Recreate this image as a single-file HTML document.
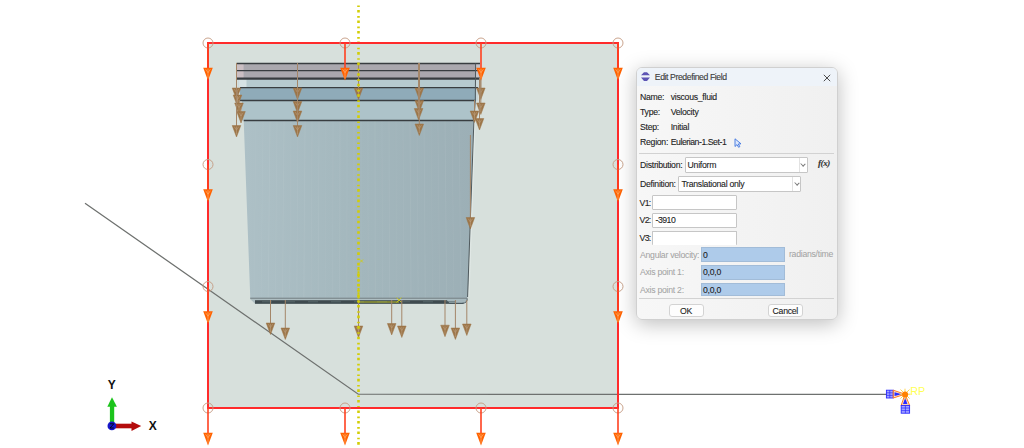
<!DOCTYPE html>
<html><head><meta charset="utf-8">
<style>
html,body{margin:0;padding:0;width:1024px;height:448px;overflow:hidden;background:#fff;}
body{position:relative;font-family:"Liberation Sans",sans-serif;}
#scene{position:absolute;left:0;top:0;}
.dlg{position:absolute;left:636px;top:67px;width:201.6px;height:253.1px;background:linear-gradient(to right,#f7f7f7,#f0f0f0);border:1px solid #d0d0d0;border-radius:6px;box-shadow:0 4px 20px rgba(0,0,0,0.26);overflow:hidden;box-sizing:border-box;font-size:8px;color:#1e1e1e;}
.tb{position:absolute;left:0;top:0;width:100%;height:18.4px;background:#eef3f9;}
.t{position:absolute;white-space:nowrap;line-height:10px;font-size:8.7px;letter-spacing:-0.27px;color:#222;-webkit-text-stroke:0.1px currentColor;}
.tt{color:#3a3a3a;letter-spacing:-0.42px;}
.fx{font-family:"Liberation Serif",serif;font-style:italic;font-weight:bold;font-size:9px;letter-spacing:-0.4px;color:#333;}
.dd{position:absolute;right:0;top:0;width:8px;height:100%;border-left:1px solid #e2e2e2;box-sizing:border-box;}
.dd:after{content:"";position:absolute;left:1.6px;top:4.2px;width:3px;height:3px;border-right:0.8px solid #7a7a7a;border-bottom:0.8px solid #7a7a7a;transform:rotate(45deg) scaleY(0.9);}
.fld{position:absolute;background:#fff;border:1px solid #c6c6c6;box-sizing:border-box;border-radius:1px;}
.bfld{position:absolute;background:#aecbea;border:1px solid #a2bcd8;box-sizing:border-box;}
.g{color:#a4a4a4;-webkit-text-stroke:0.05px currentColor;}
.sep{position:absolute;height:1px;background:#d2d2d2;}
.btn{position:absolute;background:#fdfdfd;border:1px solid #d3d3d3;box-sizing:border-box;border-radius:3px;text-align:center;}
</style></head><body>
<svg id="scene" width="1024" height="448" viewBox="0 0 1024 448">
<rect x="208" y="43" width="410" height="365" fill="#d7e0dc"/>
<polyline points="85,203.2 358.3,394.2 887,394.4" fill="none" stroke="#6e716f" stroke-width="1.25"/>
<defs><linearGradient id="bodyg" x1="0" x2="1" y1="0" y2="0"><stop offset="0" stop-color="#adc0c6"/><stop offset="0.5" stop-color="#a3b7bd"/><stop offset="1" stop-color="#9cafb6"/></linearGradient></defs>
<path d="M243.7,120.5 L473.5,120.5 L467.8,296 Q467.5,298 466,298.5 L250.2,298.5 L250.2,296 Z" fill="url(#bodyg)"/>
<line x1="256" y1="121" x2="254.0" y2="298" stroke="#ffffff" stroke-opacity="0.03" stroke-width="1"/>
<line x1="263" y1="121" x2="261.1" y2="298" stroke="#ffffff" stroke-opacity="0.04" stroke-width="1"/>
<line x1="270" y1="121" x2="268.2" y2="298" stroke="#ffffff" stroke-opacity="0.06" stroke-width="1"/>
<line x1="277" y1="121" x2="275.4" y2="298" stroke="#ffffff" stroke-opacity="0.04" stroke-width="1"/>
<line x1="284" y1="121" x2="282.5" y2="298" stroke="#ffffff" stroke-opacity="0.05" stroke-width="1"/>
<line x1="291" y1="121" x2="289.7" y2="298" stroke="#ffffff" stroke-opacity="0.03" stroke-width="1"/>
<line x1="298" y1="121" x2="296.8" y2="298" stroke="#ffffff" stroke-opacity="0.04" stroke-width="1"/>
<line x1="305" y1="121" x2="303.9" y2="298" stroke="#ffffff" stroke-opacity="0.06" stroke-width="1"/>
<line x1="312" y1="121" x2="311.1" y2="298" stroke="#ffffff" stroke-opacity="0.04" stroke-width="1"/>
<line x1="319" y1="121" x2="318.2" y2="298" stroke="#ffffff" stroke-opacity="0.05" stroke-width="1"/>
<line x1="326" y1="121" x2="325.4" y2="298" stroke="#ffffff" stroke-opacity="0.03" stroke-width="1"/>
<line x1="333" y1="121" x2="332.5" y2="298" stroke="#ffffff" stroke-opacity="0.04" stroke-width="1"/>
<line x1="340" y1="121" x2="339.6" y2="298" stroke="#ffffff" stroke-opacity="0.06" stroke-width="1"/>
<line x1="347" y1="121" x2="346.8" y2="298" stroke="#ffffff" stroke-opacity="0.04" stroke-width="1"/>
<line x1="354" y1="121" x2="353.9" y2="298" stroke="#ffffff" stroke-opacity="0.05" stroke-width="1"/>
<line x1="361" y1="121" x2="361.1" y2="298" stroke="#ffffff" stroke-opacity="0.03" stroke-width="1"/>
<line x1="368" y1="121" x2="368.2" y2="298" stroke="#ffffff" stroke-opacity="0.04" stroke-width="1"/>
<line x1="375" y1="121" x2="375.3" y2="298" stroke="#ffffff" stroke-opacity="0.06" stroke-width="1"/>
<line x1="382" y1="121" x2="382.5" y2="298" stroke="#ffffff" stroke-opacity="0.04" stroke-width="1"/>
<line x1="389" y1="121" x2="389.6" y2="298" stroke="#ffffff" stroke-opacity="0.05" stroke-width="1"/>
<line x1="396" y1="121" x2="396.8" y2="298" stroke="#ffffff" stroke-opacity="0.03" stroke-width="1"/>
<line x1="403" y1="121" x2="403.9" y2="298" stroke="#ffffff" stroke-opacity="0.04" stroke-width="1"/>
<line x1="410" y1="121" x2="411.0" y2="298" stroke="#ffffff" stroke-opacity="0.06" stroke-width="1"/>
<line x1="417" y1="121" x2="418.2" y2="298" stroke="#ffffff" stroke-opacity="0.04" stroke-width="1"/>
<line x1="424" y1="121" x2="425.3" y2="298" stroke="#ffffff" stroke-opacity="0.05" stroke-width="1"/>
<line x1="431" y1="121" x2="432.5" y2="298" stroke="#ffffff" stroke-opacity="0.03" stroke-width="1"/>
<line x1="438" y1="121" x2="439.6" y2="298" stroke="#ffffff" stroke-opacity="0.04" stroke-width="1"/>
<line x1="445" y1="121" x2="446.7" y2="298" stroke="#ffffff" stroke-opacity="0.06" stroke-width="1"/>
<line x1="452" y1="121" x2="453.9" y2="298" stroke="#ffffff" stroke-opacity="0.04" stroke-width="1"/>
<line x1="459" y1="121" x2="461.0" y2="298" stroke="#ffffff" stroke-opacity="0.05" stroke-width="1"/>
<rect x="236.6" y="63" width="243.4" height="15.7" fill="#aaa8ae"/>
<rect x="236.6" y="63.5" width="7" height="15.2" fill="#cbbfc3"/>
<rect x="238.5" y="78.7" width="240.5" height="9" fill="#b6cacf"/>
<rect x="238.5" y="78.7" width="8" height="9" fill="#d6e2e4"/>
<rect x="476" y="63.5" width="4" height="15" fill="#c4c3c8"/>
<rect x="476" y="78.7" width="3" height="9" fill="#cad8da"/>
<rect x="240" y="87.6" width="236" height="13" fill="#8fabb9"/>
<rect x="476" y="87.6" width="2" height="13" fill="#c6d4d8"/>
<rect x="242" y="100.5" width="233" height="20" fill="#adc3c9"/>
<g stroke="#383d40" stroke-width="1.3"><line x1="236.6" y1="63.5" x2="480" y2="63.5"/><line x1="236.6" y1="70.7" x2="480" y2="70.7"/><line x1="236.6" y1="78.6" x2="480" y2="78.6" stroke-width="2.2"/><line x1="240" y1="87.6" x2="478" y2="87.6"/><line x1="240" y1="100.5" x2="475.5" y2="100.5"/><line x1="243.7" y1="120.5" x2="473.5" y2="120.5"/></g>
<polyline points="475.6,63.5 475.3,100.5 473.9,120.5 467.6,297" fill="none" stroke="#505a5e" stroke-width="1"/>
<line x1="475.2" y1="121" x2="469" y2="297" stroke="#f0f4f4" stroke-opacity="0.5" stroke-width="0.8"/>
<rect x="250.2" y="297.6" width="217" height="1.5" fill="#828f93"/>
<path d="M250.2,299 L467,299 L463.5,303.8 L255,303.8 Z" fill="#aebec2"/>
<rect x="255" y="300.2" width="208.5" height="3.6" fill="#3f4b4f"/>
<path d="M446,299.2 L467,299.2 Q467,303 462,303 L449.5,303 Z" fill="#a5b7bc"/>
<path d="M449.5,303.3 L462,303.3 Q467.3,303.3 467.3,298.5" fill="none" stroke="#46545a" stroke-width="0.9"/>
<rect x="262" y="301" width="10" height="1.4" fill="#5a6a6e" fill-opacity="0.6"/>
<rect x="285" y="301" width="10" height="1.4" fill="#5a6a6e" fill-opacity="0.6"/>
<rect x="308" y="301" width="10" height="1.4" fill="#5a6a6e" fill-opacity="0.6"/>
<rect x="331" y="301" width="10" height="1.4" fill="#5a6a6e" fill-opacity="0.6"/>
<rect x="354" y="301" width="10" height="1.4" fill="#5a6a6e" fill-opacity="0.6"/>
<rect x="377" y="301" width="10" height="1.4" fill="#5a6a6e" fill-opacity="0.6"/>
<rect x="400" y="301" width="10" height="1.4" fill="#5a6a6e" fill-opacity="0.6"/>
<rect x="423" y="301" width="10" height="1.4" fill="#5a6a6e" fill-opacity="0.6"/>
<rect x="446" y="301" width="10" height="1.4" fill="#5a6a6e" fill-opacity="0.6"/>
<line x1="358.5" y1="302" x2="399" y2="302" stroke="#c8c820" stroke-width="0.9"/>
<path d="M396.5,297.5 L401.5,302.5 M401.5,297.5 L396.5,302.5" stroke="#c8c820" stroke-width="0.9"/>
<line x1="236.5" y1="63" x2="236.5" y2="89.0" stroke="#a48668" stroke-width="1"/>
<path d="M232.2,88.0 L240.8,88.0 L236.5,99.5 Z" fill="#9c7548" stroke="#9c7548" stroke-width="0.5" stroke-linejoin="round"/>
<path d="M234.35,89.2 L236.5,92.5 L238.65,89.2 M236.5,89.0 L236.5,97.0" stroke="#bca07e" stroke-width="0.6" fill="none"/>
<line x1="237.5" y1="92" x2="237.5" y2="96.0" stroke="#a48668" stroke-width="1"/>
<path d="M233.2,95.0 L241.8,95.0 L237.5,106.5 Z" fill="#9c7548" stroke="#9c7548" stroke-width="0.5" stroke-linejoin="round"/>
<path d="M235.35,96.2 L237.5,99.5 L239.65,96.2 M237.5,96.0 L237.5,104.0" stroke="#bca07e" stroke-width="0.6" fill="none"/>
<line x1="239" y1="100" x2="239" y2="104.0" stroke="#a48668" stroke-width="1"/>
<path d="M234.7,103.0 L243.3,103.0 L239,114.5 Z" fill="#9c7548" stroke="#9c7548" stroke-width="0.5" stroke-linejoin="round"/>
<path d="M236.85,104.2 L239,107.5 L241.15,104.2 M239,104.0 L239,112.0" stroke="#bca07e" stroke-width="0.6" fill="none"/>
<line x1="241" y1="108" x2="241" y2="112.5" stroke="#a48668" stroke-width="1"/>
<path d="M236.7,111.5 L245.3,111.5 L241,123 Z" fill="#9c7548" stroke="#9c7548" stroke-width="0.5" stroke-linejoin="round"/>
<path d="M238.85,112.7 L241,116.0 L243.15,112.7 M241,112.5 L241,120.5" stroke="#bca07e" stroke-width="0.6" fill="none"/>
<line x1="236.5" y1="63" x2="236.5" y2="126.5" stroke="#a48668" stroke-width="1"/>
<path d="M232.2,125.5 L240.8,125.5 L236.5,137 Z" fill="#9c7548" stroke="#9c7548" stroke-width="0.5" stroke-linejoin="round"/>
<path d="M234.35,126.7 L236.5,130.0 L238.65,126.7 M236.5,126.5 L236.5,134.5" stroke="#bca07e" stroke-width="0.6" fill="none"/>
<line x1="297.5" y1="63" x2="297.5" y2="89.0" stroke="#a48668" stroke-width="1"/>
<path d="M293.2,88.0 L301.8,88.0 L297.5,99.5 Z" fill="#9c7548" stroke="#9c7548" stroke-width="0.5" stroke-linejoin="round"/>
<path d="M295.35,89.2 L297.5,92.5 L299.65,89.2 M297.5,89.0 L297.5,97.0" stroke="#bca07e" stroke-width="0.6" fill="none"/>
<line x1="297.5" y1="63" x2="297.5" y2="102.5" stroke="#a48668" stroke-width="1"/>
<path d="M293.2,101.5 L301.8,101.5 L297.5,113 Z" fill="#9c7548" stroke="#9c7548" stroke-width="0.5" stroke-linejoin="round"/>
<path d="M295.35,102.7 L297.5,106.0 L299.65,102.7 M297.5,102.5 L297.5,110.5" stroke="#bca07e" stroke-width="0.6" fill="none"/>
<line x1="297.5" y1="63" x2="297.5" y2="112.0" stroke="#a48668" stroke-width="1"/>
<path d="M293.2,111.0 L301.8,111.0 L297.5,122.5 Z" fill="#9c7548" stroke="#9c7548" stroke-width="0.5" stroke-linejoin="round"/>
<path d="M295.35,112.2 L297.5,115.5 L299.65,112.2 M297.5,112.0 L297.5,120.0" stroke="#bca07e" stroke-width="0.6" fill="none"/>
<line x1="297.5" y1="63" x2="297.5" y2="126.5" stroke="#a48668" stroke-width="1"/>
<path d="M293.2,125.5 L301.8,125.5 L297.5,137 Z" fill="#9c7548" stroke="#9c7548" stroke-width="0.5" stroke-linejoin="round"/>
<path d="M295.35,126.7 L297.5,130.0 L299.65,126.7 M297.5,126.5 L297.5,134.5" stroke="#bca07e" stroke-width="0.6" fill="none"/>
<line x1="358.5" y1="63" x2="358.5" y2="89.0" stroke="#a48668" stroke-width="1"/>
<path d="M354.2,88.0 L362.8,88.0 L358.5,99.5 Z" fill="#9c7548" stroke="#9c7548" stroke-width="0.5" stroke-linejoin="round"/>
<path d="M356.35,89.2 L358.5,92.5 L360.65,89.2 M358.5,89.0 L358.5,97.0" stroke="#bca07e" stroke-width="0.6" fill="none"/>
<line x1="419.3" y1="63" x2="419.3" y2="89.0" stroke="#a48668" stroke-width="1"/>
<path d="M415.0,88.0 L423.6,88.0 L419.3,99.5 Z" fill="#9c7548" stroke="#9c7548" stroke-width="0.5" stroke-linejoin="round"/>
<path d="M417.15000000000003,89.2 L419.3,92.5 L421.45,89.2 M419.3,89.0 L419.3,97.0" stroke="#bca07e" stroke-width="0.6" fill="none"/>
<line x1="419.3" y1="63" x2="419.3" y2="101.5" stroke="#a48668" stroke-width="1"/>
<path d="M415.0,100.5 L423.6,100.5 L419.3,112 Z" fill="#9c7548" stroke="#9c7548" stroke-width="0.5" stroke-linejoin="round"/>
<path d="M417.15000000000003,101.7 L419.3,105.0 L421.45,101.7 M419.3,101.5 L419.3,109.5" stroke="#bca07e" stroke-width="0.6" fill="none"/>
<line x1="418.6" y1="63" x2="418.6" y2="109.5" stroke="#a48668" stroke-width="1"/>
<path d="M414.3,108.5 L422.90000000000003,108.5 L418.6,120 Z" fill="#9c7548" stroke="#9c7548" stroke-width="0.5" stroke-linejoin="round"/>
<path d="M416.45000000000005,109.7 L418.6,113.0 L420.75,109.7 M418.6,109.5 L418.6,117.5" stroke="#bca07e" stroke-width="0.6" fill="none"/>
<line x1="419.3" y1="63" x2="419.3" y2="125.0" stroke="#a48668" stroke-width="1"/>
<path d="M415.0,124.0 L423.6,124.0 L419.3,135.5 Z" fill="#9c7548" stroke="#9c7548" stroke-width="0.5" stroke-linejoin="round"/>
<path d="M417.15000000000003,125.2 L419.3,128.5 L421.45,125.2 M419.3,125.0 L419.3,133.0" stroke="#bca07e" stroke-width="0.6" fill="none"/>
<line x1="480.8" y1="78" x2="480.8" y2="89.0" stroke="#a48668" stroke-width="1"/>
<path d="M476.5,88.0 L485.1,88.0 L480.8,99.5 Z" fill="#9c7548" stroke="#9c7548" stroke-width="0.5" stroke-linejoin="round"/>
<path d="M478.65000000000003,89.2 L480.8,92.5 L482.95,89.2 M480.8,89.0 L480.8,97.0" stroke="#bca07e" stroke-width="0.6" fill="none"/>
<line x1="480.8" y1="78" x2="480.8" y2="104.0" stroke="#a48668" stroke-width="1"/>
<path d="M476.5,103.0 L485.1,103.0 L480.8,114.5 Z" fill="#9c7548" stroke="#9c7548" stroke-width="0.5" stroke-linejoin="round"/>
<path d="M478.65000000000003,104.2 L480.8,107.5 L482.95,104.2 M480.8,104.0 L480.8,112.0" stroke="#bca07e" stroke-width="0.6" fill="none"/>
<line x1="474.5" y1="100" x2="474.5" y2="112.0" stroke="#a48668" stroke-width="1"/>
<path d="M470.2,111.0 L478.8,111.0 L474.5,122.5 Z" fill="#9c7548" stroke="#9c7548" stroke-width="0.5" stroke-linejoin="round"/>
<path d="M472.35,112.2 L474.5,115.5 L476.65,112.2 M474.5,112.0 L474.5,120.0" stroke="#bca07e" stroke-width="0.6" fill="none"/>
<line x1="479.5" y1="78" x2="479.5" y2="119.5" stroke="#a48668" stroke-width="1"/>
<path d="M475.2,118.5 L483.8,118.5 L479.5,130 Z" fill="#9c7548" stroke="#9c7548" stroke-width="0.5" stroke-linejoin="round"/>
<path d="M477.35,119.7 L479.5,123.0 L481.65,119.7 M479.5,119.5 L479.5,127.5" stroke="#bca07e" stroke-width="0.6" fill="none"/>
<line x1="470.4" y1="135" x2="470.4" y2="218.5" stroke="#a48668" stroke-width="1"/>
<path d="M466.09999999999997,217.5 L474.7,217.5 L470.4,229 Z" fill="#9c7548" stroke="#9c7548" stroke-width="0.5" stroke-linejoin="round"/>
<path d="M468.25,218.7 L470.4,222.0 L472.54999999999995,218.7 M470.4,218.5 L470.4,226.5" stroke="#bca07e" stroke-width="0.6" fill="none"/>
<line x1="270.5" y1="300" x2="270.5" y2="324.0" stroke="#a48668" stroke-width="1"/>
<path d="M266.2,323.0 L274.8,323.0 L270.5,334.5 Z" fill="#9c7548" stroke="#9c7548" stroke-width="0.5" stroke-linejoin="round"/>
<path d="M268.35,324.2 L270.5,327.5 L272.65,324.2 M270.5,324.0 L270.5,332.0" stroke="#bca07e" stroke-width="0.6" fill="none"/>
<line x1="285.3" y1="300" x2="285.3" y2="329.0" stroke="#a48668" stroke-width="1"/>
<path d="M281.0,328.0 L289.6,328.0 L285.3,339.5 Z" fill="#9c7548" stroke="#9c7548" stroke-width="0.5" stroke-linejoin="round"/>
<path d="M283.15000000000003,329.2 L285.3,332.5 L287.45,329.2 M285.3,329.0 L285.3,337.0" stroke="#bca07e" stroke-width="0.6" fill="none"/>
<line x1="358.5" y1="300" x2="358.5" y2="327.0" stroke="#a48668" stroke-width="1"/>
<path d="M354.2,326.0 L362.8,326.0 L358.5,337.5 Z" fill="#9c7548" stroke="#9c7548" stroke-width="0.5" stroke-linejoin="round"/>
<path d="M356.35,327.2 L358.5,330.5 L360.65,327.2 M358.5,327.0 L358.5,335.0" stroke="#bca07e" stroke-width="0.6" fill="none"/>
<line x1="391.7" y1="300" x2="391.7" y2="324.5" stroke="#a48668" stroke-width="1"/>
<path d="M387.4,323.5 L396.0,323.5 L391.7,335 Z" fill="#9c7548" stroke="#9c7548" stroke-width="0.5" stroke-linejoin="round"/>
<path d="M389.55,324.7 L391.7,328.0 L393.84999999999997,324.7 M391.7,324.5 L391.7,332.5" stroke="#bca07e" stroke-width="0.6" fill="none"/>
<line x1="401.8" y1="300" x2="401.8" y2="327.0" stroke="#a48668" stroke-width="1"/>
<path d="M397.5,326.0 L406.1,326.0 L401.8,337.5 Z" fill="#9c7548" stroke="#9c7548" stroke-width="0.5" stroke-linejoin="round"/>
<path d="M399.65000000000003,327.2 L401.8,330.5 L403.95,327.2 M401.8,327.0 L401.8,335.0" stroke="#bca07e" stroke-width="0.6" fill="none"/>
<line x1="445" y1="300" x2="445" y2="326.2" stroke="#a48668" stroke-width="1"/>
<path d="M440.7,325.2 L449.3,325.2 L445,336.7 Z" fill="#9c7548" stroke="#9c7548" stroke-width="0.5" stroke-linejoin="round"/>
<path d="M442.85,326.4 L445,329.7 L447.15,326.4 M445,326.2 L445,334.2" stroke="#bca07e" stroke-width="0.6" fill="none"/>
<line x1="455.4" y1="300" x2="455.4" y2="329.0" stroke="#a48668" stroke-width="1"/>
<path d="M451.09999999999997,328.0 L459.7,328.0 L455.4,339.5 Z" fill="#9c7548" stroke="#9c7548" stroke-width="0.5" stroke-linejoin="round"/>
<path d="M453.25,329.2 L455.4,332.5 L457.54999999999995,329.2 M455.4,329.0 L455.4,337.0" stroke="#bca07e" stroke-width="0.6" fill="none"/>
<line x1="466.8" y1="300" x2="466.8" y2="325.0" stroke="#a48668" stroke-width="1"/>
<path d="M462.5,324.0 L471.1,324.0 L466.8,335.5 Z" fill="#9c7548" stroke="#9c7548" stroke-width="0.5" stroke-linejoin="round"/>
<path d="M464.65000000000003,325.2 L466.8,328.5 L468.95,325.2 M466.8,325.0 L466.8,333.0" stroke="#bca07e" stroke-width="0.6" fill="none"/>
<line x1="358.5" y1="5.5" x2="358.5" y2="448" stroke="#d2ce06" stroke-width="2.6" stroke-dasharray="1.6 2.8 2.6 3.54"/>
<line x1="358.5" y1="267" x2="358.5" y2="303" stroke="#d2ce06" stroke-width="2" stroke-dasharray="2.2 2"/>
<path d="M360,259.5 L363,262.5 M363,259.5 L360,262.5" stroke="#d2ce06" stroke-width="0.8"/>
<rect x="208" y="43" width="410" height="365" fill="none" stroke="#ff2b2b" stroke-width="2"/>
<circle cx="208" cy="43" r="5" fill="none" stroke="#c49a80" stroke-width="0.9"/>
<circle cx="345" cy="43" r="5" fill="none" stroke="#c49a80" stroke-width="0.9"/>
<circle cx="481" cy="43" r="5" fill="none" stroke="#c49a80" stroke-width="0.9"/>
<circle cx="618" cy="43" r="5" fill="none" stroke="#c49a80" stroke-width="0.9"/>
<circle cx="208" cy="164.5" r="5" fill="none" stroke="#c49a80" stroke-width="0.9"/>
<circle cx="208" cy="286.5" r="5" fill="none" stroke="#c49a80" stroke-width="0.9"/>
<circle cx="618" cy="164.5" r="5" fill="none" stroke="#c49a80" stroke-width="0.9"/>
<circle cx="618" cy="286.5" r="5" fill="none" stroke="#c49a80" stroke-width="0.9"/>
<circle cx="208" cy="408" r="5" fill="none" stroke="#c49a80" stroke-width="0.9"/>
<circle cx="345" cy="408" r="5" fill="none" stroke="#c49a80" stroke-width="0.9"/>
<circle cx="481" cy="408" r="5" fill="none" stroke="#c49a80" stroke-width="0.9"/>
<circle cx="618" cy="408" r="5" fill="none" stroke="#c49a80" stroke-width="0.9"/>
<line x1="208" y1="43" x2="208" y2="68.7" stroke="#ff4020" stroke-width="1.6"/>
<path d="M203.2,67.7 L212.8,67.7 L208,80.5 Z" fill="#ff6200"/>
<path d="M205.6,69.2 L208,72.7 L210.4,69.2 M208,68.7 L208,78.5" stroke="#ffae6a" stroke-width="0.7" fill="none"/>
<line x1="345" y1="43" x2="345" y2="68.7" stroke="#ff4020" stroke-width="1.6"/>
<path d="M340.2,67.7 L349.8,67.7 L345,80.5 Z" fill="#ff6200"/>
<path d="M342.6,69.2 L345,72.7 L347.4,69.2 M345,68.7 L345,78.5" stroke="#ffae6a" stroke-width="0.7" fill="none"/>
<line x1="481" y1="43" x2="481" y2="68.7" stroke="#ff4020" stroke-width="1.6"/>
<path d="M476.2,67.7 L485.8,67.7 L481,80.5 Z" fill="#ff6200"/>
<path d="M478.6,69.2 L481,72.7 L483.4,69.2 M481,68.7 L481,78.5" stroke="#ffae6a" stroke-width="0.7" fill="none"/>
<line x1="618" y1="43" x2="618" y2="68.7" stroke="#ff4020" stroke-width="1.6"/>
<path d="M613.2,67.7 L622.8,67.7 L618,80.5 Z" fill="#ff6200"/>
<path d="M615.6,69.2 L618,72.7 L620.4,69.2 M618,68.7 L618,78.5" stroke="#ffae6a" stroke-width="0.7" fill="none"/>
<line x1="208" y1="164.5" x2="208" y2="190.2" stroke="#ff4020" stroke-width="1.6"/>
<path d="M203.2,189.2 L212.8,189.2 L208,202.0 Z" fill="#ff6200"/>
<path d="M205.6,190.7 L208,194.2 L210.4,190.7 M208,190.2 L208,200.0" stroke="#ffae6a" stroke-width="0.7" fill="none"/>
<line x1="208" y1="286.5" x2="208" y2="312.2" stroke="#ff4020" stroke-width="1.6"/>
<path d="M203.2,311.2 L212.8,311.2 L208,324.0 Z" fill="#ff6200"/>
<path d="M205.6,312.7 L208,316.2 L210.4,312.7 M208,312.2 L208,322.0" stroke="#ffae6a" stroke-width="0.7" fill="none"/>
<line x1="618" y1="164.5" x2="618" y2="190.2" stroke="#ff4020" stroke-width="1.6"/>
<path d="M613.2,189.2 L622.8,189.2 L618,202.0 Z" fill="#ff6200"/>
<path d="M615.6,190.7 L618,194.2 L620.4,190.7 M618,190.2 L618,200.0" stroke="#ffae6a" stroke-width="0.7" fill="none"/>
<line x1="618" y1="286.5" x2="618" y2="312.2" stroke="#ff4020" stroke-width="1.6"/>
<path d="M613.2,311.2 L622.8,311.2 L618,324.0 Z" fill="#ff6200"/>
<path d="M615.6,312.7 L618,316.2 L620.4,312.7 M618,312.2 L618,322.0" stroke="#ffae6a" stroke-width="0.7" fill="none"/>
<line x1="208" y1="408" x2="208" y2="433.7" stroke="#ff4020" stroke-width="1.6"/>
<path d="M203.2,432.7 L212.8,432.7 L208,445.5 Z" fill="#ff6200"/>
<path d="M205.6,434.2 L208,437.7 L210.4,434.2 M208,433.7 L208,443.5" stroke="#ffae6a" stroke-width="0.7" fill="none"/>
<line x1="345" y1="408" x2="345" y2="433.7" stroke="#ff4020" stroke-width="1.6"/>
<path d="M340.2,432.7 L349.8,432.7 L345,445.5 Z" fill="#ff6200"/>
<path d="M342.6,434.2 L345,437.7 L347.4,434.2 M345,433.7 L345,443.5" stroke="#ffae6a" stroke-width="0.7" fill="none"/>
<line x1="481" y1="408" x2="481" y2="433.7" stroke="#ff4020" stroke-width="1.6"/>
<path d="M476.2,432.7 L485.8,432.7 L481,445.5 Z" fill="#ff6200"/>
<path d="M478.6,434.2 L481,437.7 L483.4,434.2 M481,433.7 L481,443.5" stroke="#ffae6a" stroke-width="0.7" fill="none"/>
<line x1="618" y1="408" x2="618" y2="433.7" stroke="#ff4020" stroke-width="1.6"/>
<path d="M613.2,432.7 L622.8,432.7 L618,445.5 Z" fill="#ff6200"/>
<path d="M615.6,434.2 L618,437.7 L620.4,434.2 M618,433.7 L618,443.5" stroke="#ffae6a" stroke-width="0.7" fill="none"/>
<g><rect x="109.9" y="405" width="4.3" height="21" fill="#1cc41c"/><path d="M107.3,406.8 L116.9,406.8 L112,397.2 Z" fill="#1cc41c"/><rect x="112" y="423.7" width="20" height="4.6" fill="#b40c0c"/><path d="M131.5,421.4 L131.5,431 L141.2,426 Z" fill="#b40c0c"/><circle cx="111.9" cy="425.9" r="4.4" fill="#1616c8"/><path d="M110,423.8 L113.8,423.8 L110,428 L113.8,428" stroke="#000" stroke-width="0.8" fill="none"/><text x="111.8" y="388.8" font-family="Liberation Sans" font-weight="bold" font-size="12" text-anchor="middle" fill="#111">Y</text><text x="152.8" y="429.8" font-family="Liberation Sans" font-weight="bold" font-size="12" text-anchor="middle" fill="#111">X</text></g>
<g><rect x="886.4" y="390.2" width="6.8" height="7.8" fill="#5a5aff" fill-opacity="0.55" stroke="#2a2aff" stroke-width="0.9"/><path d="M886.4,392.8 H893.2 M886.4,395.4 H893.2 M889.8,390.2 V398" stroke="#2a2aff" stroke-width="0.7"/><path d="M893.2,390.2 L905,394.2 L893.2,398 Z" fill="#ffb070" fill-opacity="0.35" stroke="#ff7a20" stroke-width="1"/><path d="M894.5,392.3 L902,394.2 L894.5,396 Z" fill="#2a2aff"/><path d="M901.2,405.4 L905,394.2 L909.6,405.4 Z" fill="#ffb070" fill-opacity="0.35" stroke="#ff7a20" stroke-width="1"/><path d="M903,404 L905.2,397.5 L907.4,404 Z" fill="#2a2aff"/><rect x="901.2" y="405.4" width="8.4" height="7.8" fill="#5a5aff" fill-opacity="0.55" stroke="#2a2aff" stroke-width="0.9"/><path d="M901.2,408 H909.6 M901.2,410.6 H909.6 M905.4,405.4 V413.2" stroke="#2a2aff" stroke-width="0.7"/><path d="M900.5,389.5 L909.5,398.5 M909.5,389.5 L900.5,398.5 M899.5,394.2 H910.5 M905,388.7 V399.7" stroke="#ffd040" stroke-width="0.9"/><circle cx="905.1" cy="394.4" r="3" fill="#ff8000"/><text x="910.3" y="394.8" font-family="Liberation Sans" font-size="10.8" fill="#ffff55">RP</text></g>
</svg>
<div class="dlg">
  <div class="tb"></div>
<div style="position:absolute;left:0;top:0.8px;width:100%;height:100%">
  <svg style="position:absolute;left:3.2px;top:2.6px" width="11" height="11" viewBox="0 0 11 11"><path d="M4,1.2 H7 L10,4.3 H1 Z M1,6.5 H10 L7,9.9 H4 Z" fill="#5d54b4"/></svg>
  <div class="t tt" style="left:17.8px;top:3.6px">Edit Predefined Field</div>
  <svg style="position:absolute;left:186px;top:5px" width="8" height="8" viewBox="0 0 8 8"><path d="M0.8,0.8 L7.2,7.2 M7.2,0.8 L0.8,7.2" stroke="#3a3a3a" stroke-width="0.9"/></svg>
  <div class="t" style="left:3px;top:22.8px">Name:</div><div class="t" style="left:33.7px;top:22.8px">viscous_fluid</div>
  <div class="t" style="left:3px;top:37.9px">Type:</div><div class="t" style="left:33.7px;top:37.9px">Velocity</div>
  <div class="t" style="left:3px;top:53.3px">Step:</div><div class="t" style="left:33.7px;top:53.3px">Initial</div>
  <div class="t" style="left:3px;top:68.3px">Region:</div><div class="t" style="left:33.7px;top:68.3px;letter-spacing:-0.45px">Eulerian-1.Set-1</div>
  <svg style="position:absolute;left:96.5px;top:69.5px" width="8" height="10" viewBox="0 0 8 10"><path d="M1,0.8 L1,8.5 L3,6.6 L4.6,9.3 L5.8,8.6 L4.3,6 L7,5.8 Z" fill="#dfe9fb" stroke="#3d74e0" stroke-width="0.9" stroke-linejoin="round"/></svg>
  <div class="sep" style="left:2.2px;top:84.2px;width:195px"></div>
  <div class="t" style="left:3px;top:91.4px">Distribution:</div>
  <div class="fld" style="left:48.1px;top:88.2px;width:122.5px;height:15.6px"><div class="dd"></div></div>
  <div class="t" style="left:50.6px;top:91.4px">Uniform</div>
  <div class="t fx" style="left:181px;top:89px">f(x)</div>
  <div class="t" style="left:3px;top:110.3px">Definition:</div>
  <div class="fld" style="left:41.4px;top:107.2px;width:122.6px;height:15.8px"><div class="dd"></div></div>
  <div class="t" style="left:44.4px;top:110.3px">Translational only</div>
  <div class="t" style="left:2.6px;top:129.3px;letter-spacing:-0.75px">V1:</div>
  <div class="fld" style="left:15.4px;top:126px;width:84.2px;height:15px"></div>
  <div class="t" style="left:2.6px;top:146.5px;letter-spacing:-0.75px">V2:</div>
  <div class="fld" style="left:15.4px;top:143.9px;width:84.2px;height:15px"></div>
  <div class="t" style="left:18.5px;top:146.5px;letter-spacing:-0.5px">-3910</div>
  <div class="t" style="left:2.6px;top:164.2px;letter-spacing:-0.75px">V3:</div>
  <div class="fld" style="left:15.4px;top:161.9px;width:84.2px;height:14px;border-bottom:none"></div>
  <div class="t g" style="left:3px;top:180.9px">Angular velocity:</div>
  <div class="bfld" style="left:63.6px;top:178.2px;width:84.2px;height:14.7px"></div>
  <div class="t" style="left:66px;top:180.9px">0</div>
  <div class="t g" style="left:152px;top:180.2px">radians/time</div>
  <div class="t g" style="left:3px;top:198.6px">Axis point 1:</div>
  <div class="bfld" style="left:63.6px;top:196.3px;width:84.2px;height:14.7px"></div>
  <div class="t" style="left:66px;top:198.6px">0,0,0</div>
  <div class="t g" style="left:3px;top:216.5px">Axis point 2:</div>
  <div class="bfld" style="left:63.6px;top:213.8px;width:84.2px;height:13.5px"></div>
  <div class="t" style="left:66px;top:216.5px">0,0,0</div>
  <div class="sep" style="left:2.2px;top:228.9px;width:195px"></div>
  <div class="btn" style="left:31.5px;top:234.9px;width:35px;height:13.2px"></div>
  <div class="t" style="left:31.5px;top:237.5px;width:35px;text-align:center">OK</div>
  <div class="btn" style="left:131px;top:235.5px;width:34.6px;height:13px"></div>
  <div class="t" style="left:131px;top:237.3px;width:34.6px;text-align:center">Cancel</div>
</div>
</div>
</body></html>
